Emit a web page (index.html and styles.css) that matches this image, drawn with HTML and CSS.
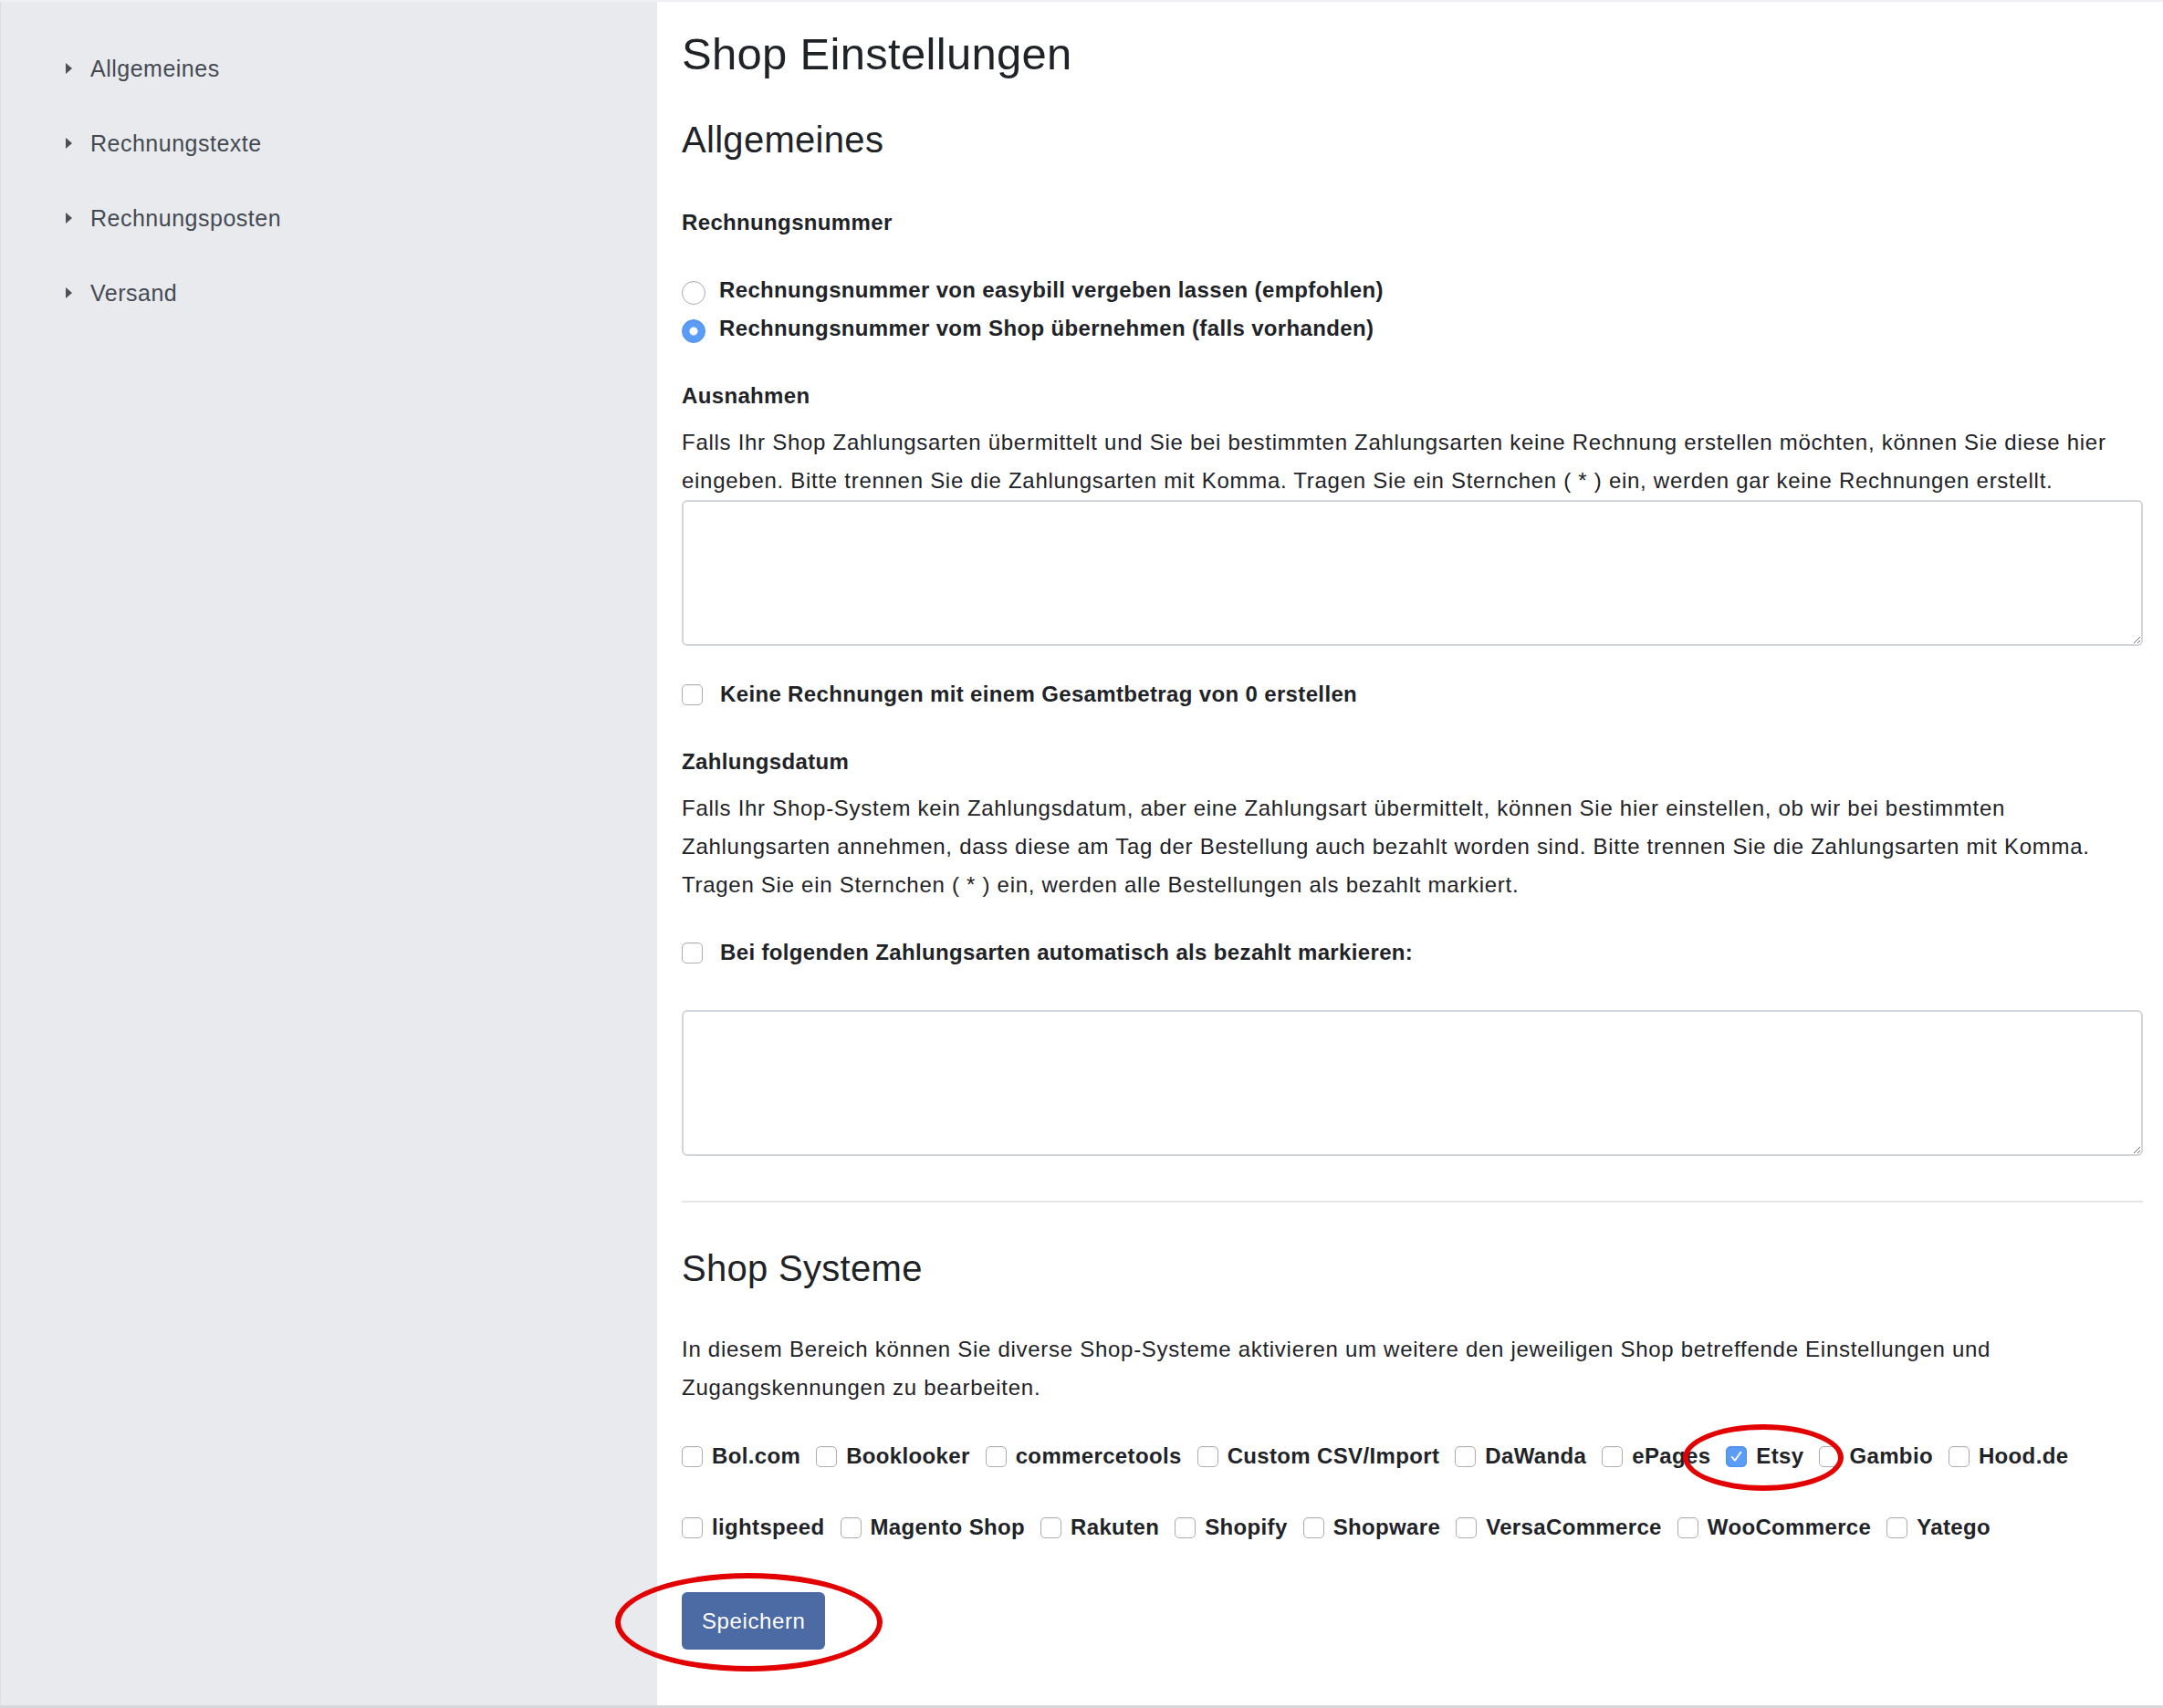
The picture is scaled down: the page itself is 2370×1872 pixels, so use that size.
FILE: index.html
```html
<!DOCTYPE html>
<html lang="de">
<head>
    <meta charset="UTF-8">
    <meta name="viewport" content="width=device-width, initial-scale=1.0">
    <title>Shop Einstellungen</title>
    <link rel="stylesheet" href="styles.css">
</head>
<body>
    <div class="page">
        <!-- Seitennavigation -->
        <aside class="sidebar">
            <ul class="side-nav">
                <li><a href="#allgemeines">Allgemeines</a></li>
                <li><a href="#rechnungstexte">Rechnungstexte</a></li>
                <li><a href="#rechnungsposten">Rechnungsposten</a></li>
                <li><a href="#versand">Versand</a></li>
            </ul>
        </aside>

        <main class="content">
            <h1>Shop Einstellungen</h1>
            <h2 id="allgemeines">Allgemeines</h2>

            <form>
                <div class="field">
                    <div class="field-title title-radios">Rechnungsnummer</div>
                    <label class="radio">
                        <input type="radio" name="invoice-number" value="easybill">
                        Rechnungsnummer von easybill vergeben lassen (empfohlen)
                    </label>
                    <label class="radio">
                        <input type="radio" name="invoice-number" value="shop" checked>
                        Rechnungsnummer vom Shop übernehmen (falls vorhanden)
                    </label>
                </div>

                <div class="field">
                    <div class="field-title">Ausnahmen</div>
                    <p class="help">Falls Ihr Shop Zahlungsarten übermittelt und Sie bei bestimmten Zahlungsarten keine Rechnung erstellen möchten, können Sie diese hier eingeben. Bitte trennen Sie die Zahlungsarten mit Komma. Tragen Sie ein Sternchen ( * ) ein, werden gar keine Rechnungen erstellt.</p>
                    <textarea class="textarea"></textarea>
                </div>

                <label class="checkbox check-single">
                    <input type="checkbox">
                    Keine Rechnungen mit einem Gesamtbetrag von 0 erstellen
                </label>

                <div class="field">
                    <div class="field-title">Zahlungsdatum</div>
                    <p class="help">Falls Ihr Shop-System kein Zahlungsdatum, aber eine Zahlungsart übermittelt, können Sie hier einstellen, ob wir bei bestimmten Zahlungsarten annehmen, dass diese am Tag der Bestellung auch bezahlt worden sind. Bitte trennen Sie die Zahlungsarten mit Komma. Tragen Sie ein Sternchen ( * ) ein, werden alle Bestellungen als bezahlt markiert.</p>
                </div>

                <label class="checkbox check-single">
                    <input type="checkbox">
                    Bei folgenden Zahlungsarten automatisch als bezahlt markieren:
                </label>
                <textarea class="textarea textarea-paid"></textarea>

                <hr class="divider">

                <h2>Shop Systeme</h2>
                <p class="help intro">In diesem Bereich können Sie diverse Shop-Systeme aktivieren um weitere den jeweiligen Shop betreffende Einstellungen und Zugangskennungen zu bearbeiten.</p>

                <div class="shop-list">
                    <label class="checkbox shop"><input type="checkbox">Bol.com</label>
                    <label class="checkbox shop"><input type="checkbox">Booklooker</label>
                    <label class="checkbox shop"><input type="checkbox">commercetools</label>
                    <label class="checkbox shop"><input type="checkbox">Custom CSV/Import</label>
                    <label class="checkbox shop"><input type="checkbox">DaWanda</label>
                    <label class="checkbox shop"><input type="checkbox">ePages</label>
                    <label class="checkbox shop marked"><input type="checkbox" checked>Etsy<span class="ring ring-etsy"></span></label>
                    <label class="checkbox shop"><input type="checkbox">Gambio</label>
                    <label class="checkbox shop"><input type="checkbox">Hood.de</label>
                    <label class="checkbox shop"><input type="checkbox">lightspeed</label>
                    <label class="checkbox shop"><input type="checkbox">Magento Shop</label>
                    <label class="checkbox shop"><input type="checkbox">Rakuten</label>
                    <label class="checkbox shop"><input type="checkbox">Shopify</label>
                    <label class="checkbox shop"><input type="checkbox">Shopware</label>
                    <label class="checkbox shop"><input type="checkbox">VersaCommerce</label>
                    <label class="checkbox shop"><input type="checkbox">WooCommerce</label>
                    <label class="checkbox shop"><input type="checkbox">Yatego</label>
                </div>

                <div class="actions">
                    <button type="submit" class="btn-save">Speichern</button>
                    <span class="ring ring-save"></span>
                </div>
            </form>
        </main>
    </div>
</body>
</html>
```

FILE: styles.css
```css
* {
    box-sizing: border-box;
}

body {
    margin: 0;
    font-family: 'Liberation Sans', Arial, sans-serif;
    font-size: 24px;
    line-height: 42px;
    letter-spacing: 0.72px;
    color: #1f2327;
    background: #fff;
}

.page {
    display: flex;
    min-height: 100vh;
    border-top: 2px solid #eff0f3;
    border-bottom: 3px solid #d6d8dc;
}

/* Seitennavigation */
.sidebar {
    width: 720px;
    flex-shrink: 0;
    background: #e9eaee;
    border-left: 1px solid #dcdee2;
}

.side-nav {
    list-style: none;
    margin: 0;
    padding: 52px 0 0 0;
}

.side-nav li {
    margin-bottom: 40px;
}

.side-nav a {
    display: flex;
    align-items: center;
    font-size: 25px;
    letter-spacing: 0.5px;
    color: #454a52;
    text-decoration: none;
    padding-left: 71px;
}

.side-nav a::before {
    content: "";
    width: 0;
    height: 0;
    border-top: 6px solid transparent;
    border-bottom: 6px solid transparent;
    border-left: 7px solid #4b5058;
    margin-right: 20px;
}

/* Inhalt */
.content {
    flex: 1;
    padding: 0 22px 60px 27px;
}

h1 {
    font-size: 49px;
    line-height: 58px;
    font-weight: 500;
    letter-spacing: 0.3px;
    margin: 28px 0 41px;
}

h2 {
    font-size: 40px;
    line-height: 48px;
    font-weight: 500;
    letter-spacing: 0.3px;
    margin: 0;
}

form {
    margin-top: 46px;
}

.field {
    margin-bottom: 32px;
}

.field-title {
    font-weight: bold;
    letter-spacing: 0.35px;
    margin-bottom: 9px;
}

.field-title.title-radios {
    margin-bottom: 32px;
}

.help {
    margin: 0;
}

.radio,
.checkbox {
    display: flex;
    align-items: center;
    font-weight: bold;
    letter-spacing: 0.35px;
    cursor: pointer;
}

.radio {
    gap: 15px;
}

.check-single {
    gap: 19px;
    margin-bottom: 32px;
}

input[type="radio"],
input[type="checkbox"] {
    appearance: none;
    margin: 0;
    flex-shrink: 0;
    background: #fff;
    border: 1px solid #aeaeae;
    box-shadow: inset 0 1px 2px rgba(0, 0, 0, 0.06);
    cursor: pointer;
}

input[type="radio"] {
    width: 26px;
    height: 26px;
    border-radius: 50%;
    position: relative;
    top: 3px;
}

input[type="radio"]:checked {
    border-color: #4b8ff0;
    background: radial-gradient(circle, #fff 0 4px, #5b9df6 5px);
}

input[type="checkbox"] {
    width: 23px;
    height: 23px;
    border-radius: 5px;
}

input[type="checkbox"]:checked {
    border-color: #4b8ff0;
    background: #5b9df6 url("data:image/svg+xml,%3Csvg xmlns='http://www.w3.org/2000/svg' viewBox='0 0 24 24'%3E%3Cpath d='M6.5 12.5l3.8 4.2L17.5 6.5' fill='none' stroke='%23fff' stroke-width='2.2' stroke-linecap='round' stroke-linejoin='round'/%3E%3C/svg%3E") center / 100% no-repeat;
}

.textarea {
    display: block;
    width: 100%;
    height: 160px;
    border: 2px solid #d2d6db;
    border-radius: 6px;
    font: inherit;
    padding: 8px 12px;
    resize: vertical;
}

.textarea-paid {
    margin-top: 42px;
}

.divider {
    border: none;
    border-top: 2px solid #e4e6e9;
    margin: 49px 0 48px;
}

.intro {
    margin: 44px 0 33px;
}

/* Shop Systeme */
.shop-list {
    display: flex;
    flex-wrap: wrap;
    row-gap: 36px;
    column-gap: 17px;
}

.shop {
    gap: 10px;
}

.marked {
    position: relative;
}

.actions {
    position: relative;
    margin-top: 50px;
    display: inline-block;
}

.btn-save {
    display: block;
    height: 63px;
    padding: 0 22px;
    font: inherit;
    letter-spacing: 0.6px;
    color: #fff;
    background: #4c6ba4;
    border: none;
    border-radius: 6px;
    cursor: pointer;
}

.btn-save:hover {
    background: #42609a;
}

/* rote Markierungen */
.ring {
    position: absolute;
    border: 6px solid #e20000;
    border-radius: 50%;
    pointer-events: none;
}

.ring-etsy {
    left: -47px;
    top: -14px;
    width: 176px;
    height: 73px;
}

.ring-save {
    left: -73px;
    top: -21px;
    width: 293px;
    height: 108px;
}
```
